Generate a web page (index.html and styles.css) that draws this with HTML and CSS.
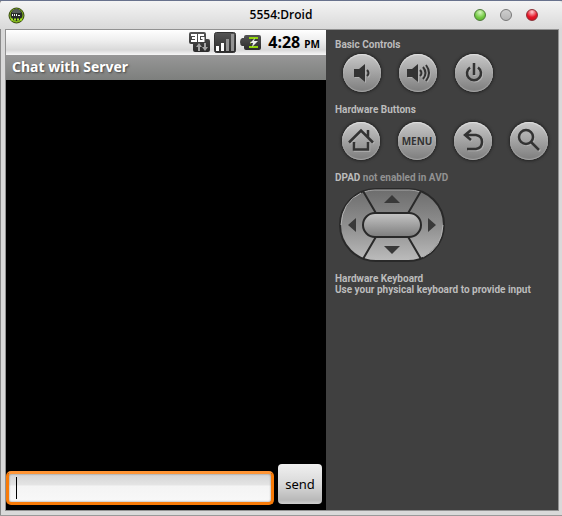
FILE: index.html
```html
<!DOCTYPE html>
<html lang="en">
<head>
<meta charset="utf-8">
<meta name="viewport" content="width=device-width, initial-scale=1">
<title>5554:Droid</title>
<link rel="stylesheet" href="styles.css">
</head>
<body>
<svg class="defs" width="0" height="0" aria-hidden="true">
  <defs>
    <linearGradient id="metal" x1="0" y1="0" x2="0" y2="1"><stop offset="0" stop-color="#6c6c6c"/><stop offset=".55" stop-color="#929292"/><stop offset="1" stop-color="#bcbcbc"/></linearGradient>
    <linearGradient id="pill" x1="0" y1="0" x2="0" y2="1"><stop offset="0" stop-color="#c6c6c6"/><stop offset="1" stop-color="#7c7c7c"/></linearGradient>
    <linearGradient id="tile" x1="0" y1="0" x2="0" y2="1"><stop offset="0" stop-color="#555"/><stop offset="1" stop-color="#2b2b2b"/></linearGradient>
  </defs>
</svg>
<div class="window">
  <header class="titlebar">
    <svg class="app-icon" width="18" height="18" viewBox="0 0 18 18" aria-hidden="true">
      <circle cx="8.500" cy="9.500" r="7.500" fill="#84b51c" stroke="#34480d"/>
      <circle cx="8.500" cy="9" r="6" fill="#252a28"/>
      <path d="M4 7a4.500 4 0 0 1 9 0z" fill="#565d5a"/>
      <path d="M4 8h1v2H4zM6 8h1v2H6zM8 8h1v2H8zM10 9h2v1h-2z" fill="#eee"/>
      <path d="M3 13.500h11" stroke="#a6ea22" stroke-width="2" stroke-dasharray="2 1"/>
    </svg>
    <h1 class="window-title">5554:Droid</h1>
    <div class="window-controls">
      <button class="orb green" aria-label="Minimize"></button>
      <button class="orb grey" aria-label="Maximize"></button>
      <button class="orb red" aria-label="Close"></button>
    </div>
  </header>
  <main class="workspace">
    <section class="screen">
      <div class="statusbar">
        <svg width="21" height="21" viewBox="0 0 21 21" aria-hidden="true">
          <path d="M2 0h13q2 0 2 2v5h2q2 0 2 2v9q0 2-2 2H6q-2 0-2-2v-6H2q-2 0-2-2V2q0-2 2-2z" fill="url(#tile)"/>
          <path d="M2 3h5v6H2M3 6h4M15 3H10v6h4.500V6H12" fill="none" stroke="#fff" stroke-width="2"/>
          <path d="M10 11l3 4h-2v4H9v-4H7zM15 11h2v4h2l-3 4-3-4h2z" fill="#a5a5a5"/>
        </svg>
        <svg width="22" height="21" viewBox="0 0 22 21" aria-hidden="true">
          <rect x=".5" y=".5" width="21" height="20" rx="2" fill="url(#tile)" stroke="#333"/>
          <path d="M3.500 19v-5M8.500 19v-8" stroke="#fff" stroke-width="3"/>
          <path d="M13.500 19V7M18.500 19V2" stroke="#939393" stroke-width="3"/>
        </svg>
        <svg width="21" height="18" viewBox="0 0 21 18" aria-hidden="true">
          <path d="M6 1h13q2 0 2 2v11q0 2-2 2H6q-2 0-2-2v-2H2q-2-1-2-4t2-4h2V3q0-2 2-2z" fill="url(#tile)"/>
          <path d="M9 3h9v11H9v-2h3l-2-3 2-4H9z" fill="#92d50a"/>
          <path d="M11 5h7v7h-7z" fill="#3b3b3b"/>
          <path d="M15 4l-5 5h3l-1 4 6-6h-4z" fill="#eee"/>
        </svg>
        <time class="clock">4:28 <small>PM</small></time>
      </div>
      <h2 class="activity-title">Chat with Server</h2>
      <div class="messages"></div>
      <form class="composer">
        <input class="message" type="text" aria-label="Message">
        <button class="send" type="button">send</button>
      </form>
    </section>
    <aside class="controls">
      <section class="basic">
        <h3>Basic Controls</h3>
        <div class="keys">
          <button class="key" aria-label="Volume down"><svg width="38" height="38" viewBox="0 0 38 38"><path d="M11 15h5l6-5v18l-6-5h-5z"/><path class="line" d="M24 16q3 3 0 6"/></svg></button>
          <button class="key" aria-label="Volume up"><svg width="38" height="38" viewBox="0 0 38 38"><path d="M8 15h5l6-5v18l-6-5H8z"/><path class="line" d="M21 16q3 3 0 6M24 13q5 6 0 12M27 11q6 8 0 16"/></svg></button>
          <button class="key" aria-label="Power"><svg width="38" height="38" viewBox="0 0 38 38"><path class="line thick" d="M19 9v12M15 13.500a7 7 0 1 0 8 0"/></svg></button>
        </div>
      </section>
      <section class="hardware">
        <h3>Hardware Buttons</h3>
        <div class="keys">
          <button class="key" aria-label="Home"><svg width="38" height="38" viewBox="0 0 38 38"><path class="line thick" d="M7 20.500L19 8.500l12 12M26 15V8M12 20v7.500h14V20"/></svg></button>
          <button class="key menu">MENU</button>
          <button class="key" aria-label="Back"><svg width="38" height="38" viewBox="0 0 38 38"><path class="line thick" d="M17 8l-6 5 6 5M11 13h11q6 1 6 7t-6 7H13"/></svg></button>
          <button class="key" aria-label="Search"><svg width="38" height="38" viewBox="0 0 38 38"><circle class="line thick" cx="16" cy="15" r="7"/><path class="line thick" d="M21 20l8 8"/></svg></button>
        </div>
      </section>
      <section class="direction">
        <h3>DPAD <span>not enabled in AVD</span></h3>
        <div class="dpad">
          <svg width="108" height="76" viewBox="0 0 108 76" aria-hidden="true">
            <rect x="2" y="2" width="104" height="72" rx="36" fill="url(#metal)" stroke="#292929" stroke-width="2"/>
            <path d="M26 5q5-2 11-2h34q6 0 11 2" fill="none" stroke="#aaa"/>
            <path d="M3 38Q4 15 23 6M105 38Q104 61 85 70" fill="none" stroke="#b5b5b5"/>
            <path d="M25 4l14 24M83 4L69 28M25 72l14-24M83 72L69 48" stroke="#292929" stroke-width="2"/>
            <rect x="25" y="26" width="58" height="24" rx="12" fill="url(#pill)" stroke="#292929" stroke-width="2"/>
            <path d="M46 16l8-8 8 8zM46 59h16l-8 8zM18 31v14l-8-7zM90 31v14l8-7z" fill="#393939"/>
          </svg>
          <button class="up" aria-label="Up"></button>
          <button class="left" aria-label="Left"></button>
          <button class="center" aria-label="Select"></button>
          <button class="right" aria-label="Right"></button>
          <button class="down" aria-label="Down"></button>
        </div>
      </section>
      <section class="keyboard">
        <h3>Hardware Keyboard</h3>
        <p>Use your physical keyboard to provide input</p>
      </section>
    </aside>
  </main>
</div>
</body>
</html>
```
FILE: styles.css
```css
* { box-sizing: border-box; }
body { margin: 0; }
h1, h2, h3, p { margin: 0; }
button { padding: 0; border: 0; background: none; }
svg { display: block; flex: none; }
.defs { position: absolute; }

.window {
  min-height: 100vh;
  display: flex;
  flex-direction: column;
  padding: 0 3px 4px 5px;
  background: #d9d9d9;
  border-top: 1px solid #68728d;
  border-bottom: 1px solid #999;
  box-shadow: inset 1px 0 #8a8a8a;
}
.titlebar {
  display: grid;
  grid-template-columns: 1fr auto 1fr;
  align-items: center;
  height: 28px;
  margin: 0 -3px 0 -5px;
  padding: 0 24px;
  background: linear-gradient(#f4f4f4, #d9d9d9);
  border-radius: 3px 3px 0 0;
}
.app-icon { margin-left: -16px; }
.window-title { font: 600 12px/16px "Open Sans", sans-serif; color: #000; }
.window-controls { display: flex; justify-content: flex-end; gap: 14px; }
.orb { width: 12px; height: 12px; border-radius: 50%; border: 1px solid #777; }
.green { background: radial-gradient(circle at 50% 25%, #d5f5bd, #6fc83e 60%, #58a735); border-color: #4c7938; }
.grey { background: linear-gradient(#cecece, #b5b5b5); }
.red { background: radial-gradient(circle at 50% 20%, #ffd0d4, #e51728 55%, #c90b1c); border-color: #8d3036; }

.workspace {
  flex: 1;
  display: grid;
  grid-template-columns: 320fr 232fr;
  background: #404040;
  border: 1px solid #929292;
}
.screen { display: flex; flex-direction: column; background: #000; }
.statusbar {
  display: flex;
  align-items: center;
  justify-content: flex-end;
  gap: 4px;
  height: 25px;
  padding-right: 6px;
  background: linear-gradient(#fff, #ededed 45%, #d9d9d9 80%, #f7f7f7);
}
.clock { margin-left: 3px; font: 700 16px/24px "Noto Sans", sans-serif; color: #000; }
.clock small { font-size: 10px; }
.activity-title {
  height: 25px;
  padding-left: 6px;
  background: linear-gradient(#979797, #7d7f7d);
  color: #fff;
  font: 700 14px/24px "Noto Sans", sans-serif;
  text-shadow: 1px 1px 2px #444;
}
.messages { flex: 1; }
.composer { display: flex; align-items: flex-end; gap: 4px; padding: 0 4px 5px 0; }
.message {
  flex: 1;
  min-width: 0;
  height: 34px;
  padding: 0 10px;
  border: 3px solid #f87b08;
  border-top-color: #ff9637;
  border-radius: 5px;
  outline: 0;
  background:
    linear-gradient(#000, #000) 7px 3px / 1px 22px no-repeat,
    linear-gradient(#d4d4d4, #e5e5e5 40%, #f4f4f4 42%, #f8f8f8);
  box-shadow: inset 0 0 2px #777;
  font: 16px "Noto Sans", sans-serif;
}
.send {
  width: 44px;
  height: 40px;
  margin-bottom: 1px;
  border-radius: 4px;
  background: linear-gradient(#f0f0f0, #d9d9d9 50%, #b9b9b9 90%, #cecece);
  color: #000;
  font: 13px/20px "Noto Sans", sans-serif;
}

.controls { padding: 9px; color: #bcbcbc; font: 700 10px/11px Roboto, sans-serif; }
.controls h3 { font: inherit; }
.controls h3 span { color: #929292; }
.keys { display: flex; gap: 18px; }
.key {
  width: 38px;
  height: 38px;
  flex: none;
  border-radius: 50%;
  background: linear-gradient(#c8c8c8, #7d7d7d);
  box-shadow: 0 0 3px 1px #222, inset 0 1px 1px #e0e0e0, inset 0 -1px 1px #a5a5a5;
  color: #333;
}
.key path { fill: #333; }
.key svg { filter: drop-shadow(1px 1px 0 #b0b0b0); }
.key .line { fill: none; stroke: #333; stroke-width: 2; }
.key .thick { stroke-width: 2.5; }
.menu { font: 700 10px/14px "Noto Sans", sans-serif; text-shadow: 1px 1px #a9a9a9; }
.basic .keys { margin: 4px 0 12px 8px; }
.hardware .keys { margin: 7px 0 12px 7px; }
.dpad {
  position: relative;
  display: grid;
  grid-template: "up up up" 26px "left center right" 24px "down down down" 26px / 25px 58px 25px;
  width: 108px;
  margin: 4px 0 10px 3px;
}
.dpad svg { position: absolute; inset: 0; }
.dpad button { position: relative; border-radius: 12px; }
.up { grid-area: up; }
.left { grid-area: left; }
.center { grid-area: center; }
.right { grid-area: right; }
.down { grid-area: down; }
```
